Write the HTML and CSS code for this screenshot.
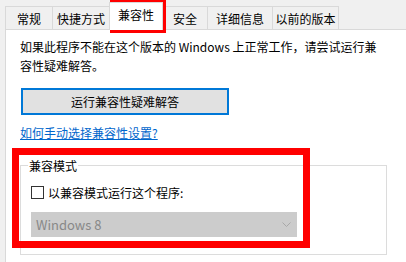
FILE: index.html
```html
<!DOCTYPE html>
<html lang="zh-CN">
<head>
	<meta charset="UTF-8">
	<meta name="viewport" content="width=device-width">
	<title>属性 - 兼容性</title>
	<link rel="stylesheet" href="styles.css">
</head>
<body>
<div class="tabs">
	<div class="tab w48">常规</div>
	<div class="tab w57">快捷方式</div>
	<div class="tab sel w52">兼容性</div>
	<div class="tab w45">安全</div>
	<div class="tab w63">详细信息</div>
	<div class="tab w68">以前的版本</div>
</div>
<div class="panel">
	<p class="desc">如果此程序不能在这个版本的 Windows 上正常工作，请尝试运行兼容性疑难解答。</p>
	<button class="btn">运行兼容性疑难解答</button>
	<div class="linkrow"><a class="link" href="#">如何手动选择兼容性设置?</a></div>
	<fieldset class="group">
		<legend>兼容模式</legend>
		<label class="chk"><span class="box"></span>以兼容模式运行这个程序:</label>
		<div class="combo">
			<span>Windows 8</span>
			<svg width="9" height="5" viewBox="0 0 9 5"><path d="M0.5 0.5 L4.5 4.5 L8.5 0.5" fill="none" stroke="#a8a8a8" stroke-width="1"/></svg>
		</div>
	</fieldset>
</div>
<!-- red highlight boxes -->
<div class="mark mark-tab"></div>
<div class="mark mark-group"></div>
</body>
</html>
```

FILE: styles.css
```css
*{box-sizing:border-box;margin:0;padding:0;}
body{width:406px;height:262px;overflow:hidden;position:relative;background-color:#f0f0f0;font-family:"Noto Sans CJK SC","Noto Sans",sans-serif;font-size:12px;color:#000;}
.tabs{display:flex;align-items:flex-end;height:29px;padding-left:5px;}
.tab{height:23px;padding-top:2px;line-height:19px;text-align:center;border:1px solid #d9d9d9;border-bottom:none;margin-left:-1px;background-color:#f0f0f0;white-space:nowrap;}
.tab:first-child{margin-left:0;}
.tab.sel{height:28px;margin-bottom:-1px;background-color:#fff;position:relative;z-index:1;}
.w48{width:48px;}
.w57{width:58px;}
.w52{width:54px;}
.w45{width:46px;}
.w63{width:66px;}
.w68{width:67px;}
.panel{margin-left:5px;height:233px;background-color:#fff;border-top:1px solid #d9d9d9;border-left:1px solid #d9d9d9;padding:7px 0 0 14px;}
.desc{width:358px;line-height:19px;}
.btn{display:block;margin:13px 0 0 1px;width:208px;height:27px;border:2px solid #0078d7;background-color:#e1e1e1;font-family:inherit;font-size:12px;color:#000;}
.linkrow{margin-top:8px;line-height:19px;}
.link{color:#0066cc;text-decoration:underline;}
.group{margin-top:14px;width:367px;border:1px solid #dcdcdc;padding:8px 10px 17px 10px;}
.group legend{margin-left:-3px;padding:0 1px;line-height:19px;}
.chk{display:flex;align-items:center;line-height:19px;}
.box{width:13px;height:13px;border:1px solid #333;background-color:#fff;margin-right:4px;}
.combo{margin-top:10px;width:266px;height:25px;background-color:#ccc;color:#888;font-size:13px;display:flex;align-items:center;justify-content:space-between;padding:0 6px 0 5px;}
.mark{position:absolute;border-style:solid;border-color:#f00;}
.mark-tab{left:110px;top:0;width:56px;height:33px;border-width:6px;}
.mark-group{left:12px;top:148px;width:298px;height:100px;border-width:7px;}
```
